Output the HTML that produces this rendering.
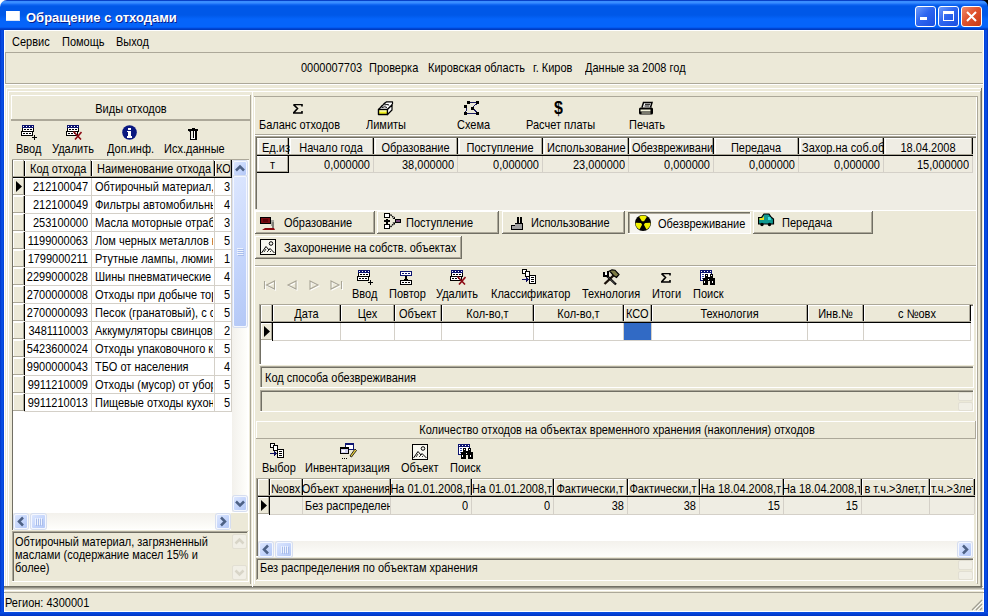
<!DOCTYPE html>
<html><head><meta charset="utf-8"><style>
html,body{margin:0;padding:0;width:988px;height:616px;overflow:hidden;background:#ECE9D8;}
.c1{left:0;top:0;width:8px;height:8px;background:#fff}.c2{left:980px;top:0;width:8px;height:8px;background:#000}
body{position:relative;font-family:"Liberation Sans",sans-serif;font-size:11px;color:#000;}
div,span,svg{position:absolute;}
.t{white-space:nowrap;line-height:13px;overflow:hidden;transform:scaleY(1.12);transform-origin:0 10px;}
.ct span{display:inline-block;transform:scaleY(1.12);transform-origin:0 10px;}
</style></head><body>
<div class="c1"></div><div class="c2"></div>
<div style="left:0;top:0;width:988px;height:30px;border-radius:7px 7px 0 0;background:linear-gradient(#0841C8 0px,#0841C8 1px,#3A8EFF 1px,#3A8EFF 3px,#1A70F8 4px,#0058E8 6px,#0058E8 15px,#0564FA 19px,#0564FA 27px,#0050E8 28px,#003CC0 29px,#003CC0 30px)"></div>
<div style="left:0px;top:30px;width:4px;height:586px;background:linear-gradient(90deg,#0034C8,#0A52E8 50%,#003DD6)"></div>
<div style="left:984px;top:30px;width:4px;height:586px;background:linear-gradient(90deg,#003DD6,#0A52E8 50%,#0030C0)"></div>
<div style="left:0px;top:612px;width:988px;height:4px;background:linear-gradient(#0A4FE4,#0034C4)"></div>
<div style="left:6px;top:11px;width:14px;height:10px;background:#FFFFFF;box-shadow:inset -1px -1px 0 #D8E4F8"></div>
<span class="t" style="left:26px;top:10px;font-weight:bold;font-size:13px;line-height:16px;color:#fff;transform:none;text-shadow:1px 1px 0 #0A1E8A">Обращение с отходами</span>
<div style="left:915px;top:6px;width:21px;height:21px;box-sizing:border-box;border:1px solid #fff;border-radius:3px;background:linear-gradient(135deg,#6E9BFA 0%,#2E66F0 45%,#1B4FE0 100%)"></div>
<div style="left:938px;top:6px;width:21px;height:21px;box-sizing:border-box;border:1px solid #fff;border-radius:3px;background:linear-gradient(135deg,#6E9BFA 0%,#2E66F0 45%,#1B4FE0 100%)"></div>
<div style="left:961px;top:6px;width:21px;height:21px;box-sizing:border-box;border:1px solid #fff;border-radius:3px;background:linear-gradient(135deg,#F08A6A 0%,#E0532E 45%,#C83A14 100%)"></div>
<div style="left:920px;top:17px;width:7px;height:3px;background:#fff"></div>
<div style="left:943px;top:11px;width:11px;height:10px;box-sizing:border-box;border:1px solid #fff;border-top:3px solid #fff"></div>
<svg style="position:absolute;left:961px;top:6px" width="21" height="21"><path d="M6 6L15 15M15 6L6 15" stroke="#fff" stroke-width="2" /></svg>
<div style="left:4px;top:30px;width:980px;height:1px;background:#FFFFFF"></div>
<span class="t" style="left:12px;top:36px;overflow:visible;">Сервис</span>
<span class="t" style="left:62px;top:36px;overflow:visible;">Помощь</span>
<span class="t" style="left:116px;top:36px;overflow:visible;">Выход</span>
<div style="left:5px;top:52px;width:977px;height:1px;background:#ACA899"></div>
<div style="left:5px;top:52px;width:1px;height:31px;background:#ACA899"></div>
<div style="left:4px;top:83px;width:980px;height:1px;background:#ACA899"></div>
<div style="left:4px;top:84px;width:980px;height:1px;background:#FFFFFF"></div>
<span class="t" style="left:301px;top:62px;overflow:visible;">0000007703</span>
<span class="t" style="left:369px;top:62px;overflow:visible;">Проверка</span>
<span class="t" style="left:428px;top:62px;overflow:visible;">Кировская область</span>
<span class="t" style="left:533px;top:62px;overflow:visible;">г. Киров</span>
<span class="t" style="left:585px;top:62px;overflow:visible;">Данные за 2008 год</span>
<div style="left:4px;top:586px;width:980px;height:1px;background:#ACA899"></div>
<div style="left:4px;top:587px;width:980px;height:1px;background:#FFFFFF"></div>
<span class="t" style="left:5px;top:597px;overflow:visible;">Регион: 4300001</span>
<div style="left:11px;top:95px;width:240px;height:1px;background:#FFFFFF"></div>
<div style="left:11px;top:95px;width:1px;height:26px;background:#FFFFFF"></div>
<div style="left:11px;top:120px;width:240px;height:1px;background:#ACA899"></div>
<div style="left:250px;top:95px;width:1px;height:26px;background:#ACA899"></div>
<div style="left:11px;top:119px;width:239px;height:1px;background:#ACA899"></div>
<span class="t" style="left:11px;top:103px;width:240px;text-align:center;">Виды отходов</span>
<span class="t" style="left:16px;top:143px;overflow:visible;">Ввод</span>
<span class="t" style="left:52px;top:143px;overflow:visible;">Удалить</span>
<span class="t" style="left:107px;top:143px;overflow:visible;">Доп.инф.</span>
<span class="t" style="left:164px;top:143px;overflow:visible;">Исх.данные</span>
<div style="left:12px;top:159px;width:237px;height:371px;background:#fff"></div>
<div style="left:12px;top:159px;width:1px;height:371px;background:#716F64"></div>
<div style="left:12px;top:159px;width:237px;height:1px;background:#ACA899"></div>
<div style="left:13px;top:160px;width:218px;height:17px;background:#ECE9D8"></div>
<div style="left:13px;top:160px;width:11px;height:1px;background:#FFFFFF"></div>
<div style="left:13px;top:160px;width:1px;height:16px;background:#FFFFFF"></div>
<div style="left:23px;top:160px;width:1px;height:17px;background:#ACA899"></div>
<div style="left:24px;top:160px;width:1px;height:18px;background:#000"></div>
<div style="left:24px;top:160px;width:67px;height:1px;background:#FFFFFF"></div>
<div style="left:25px;top:160px;width:1px;height:16px;background:#FFFFFF"></div>
<div style="left:90px;top:160px;width:1px;height:17px;background:#ACA899"></div>
<div style="left:91px;top:160px;width:1px;height:18px;background:#000"></div>
<span class="t" style="left:30px;top:163px;width:64px;">Код отхода</span>
<div style="left:91px;top:160px;width:123px;height:1px;background:#FFFFFF"></div>
<div style="left:92px;top:160px;width:1px;height:16px;background:#FFFFFF"></div>
<div style="left:213px;top:160px;width:1px;height:17px;background:#ACA899"></div>
<div style="left:214px;top:160px;width:1px;height:18px;background:#000"></div>
<span class="t" style="left:97px;top:163px;width:120px;">Наименование отхода</span>
<div style="left:214px;top:160px;width:17px;height:1px;background:#FFFFFF"></div>
<div style="left:215px;top:160px;width:1px;height:16px;background:#FFFFFF"></div>
<div style="left:230px;top:160px;width:1px;height:17px;background:#ACA899"></div>
<div style="left:231px;top:160px;width:1px;height:18px;background:#000"></div>
<span class="t" style="left:216px;top:163px;width:14px;">КО</span>
<div style="left:13px;top:176px;width:218px;height:1px;background:#ACA899"></div>
<div style="left:13px;top:177px;width:218px;height:1px;background:#000"></div>
<div style="left:13px;top:178px;width:11px;height:17px;background:#ECE9D8"></div>
<div style="left:13px;top:178px;width:11px;height:1px;background:#FFFFFF"></div>
<div style="left:13px;top:178px;width:1px;height:17px;background:#FFFFFF"></div>
<div style="left:23px;top:178px;width:1px;height:17px;background:#ACA899"></div>
<div style="left:13px;top:194px;width:11px;height:1px;background:#ACA899"></div>
<div style="left:24px;top:178px;width:1px;height:18px;background:#000"></div>
<div style="left:24px;top:195px;width:207px;height:1px;background:#D4D0C8"></div>
<div style="left:91px;top:178px;width:1px;height:18px;background:#D4D0C8"></div>
<div style="left:214px;top:178px;width:1px;height:18px;background:#D4D0C8"></div>
<div style="left:231px;top:178px;width:1px;height:18px;background:#D4D0C8"></div>
<span class="t" style="left:18px;top:181px;width:70px;text-align:right;">212100047</span>
<span class="t" style="left:95px;top:181px;width:118px;">Обтирочный материал, загрязненный</span>
<span class="t" style="left:218px;top:181px;width:12px;text-align:right;">3</span>
<div style="left:13px;top:196px;width:11px;height:17px;background:#ECE9D8"></div>
<div style="left:13px;top:196px;width:11px;height:1px;background:#FFFFFF"></div>
<div style="left:13px;top:196px;width:1px;height:17px;background:#FFFFFF"></div>
<div style="left:23px;top:196px;width:1px;height:17px;background:#ACA899"></div>
<div style="left:13px;top:212px;width:11px;height:1px;background:#ACA899"></div>
<div style="left:24px;top:196px;width:1px;height:18px;background:#000"></div>
<div style="left:24px;top:213px;width:207px;height:1px;background:#D4D0C8"></div>
<div style="left:91px;top:196px;width:1px;height:18px;background:#D4D0C8"></div>
<div style="left:214px;top:196px;width:1px;height:18px;background:#D4D0C8"></div>
<div style="left:231px;top:196px;width:1px;height:18px;background:#D4D0C8"></div>
<span class="t" style="left:18px;top:199px;width:70px;text-align:right;">212100049</span>
<span class="t" style="left:95px;top:199px;width:118px;">Фильтры автомобильные</span>
<span class="t" style="left:218px;top:199px;width:12px;text-align:right;">4</span>
<div style="left:13px;top:214px;width:11px;height:17px;background:#ECE9D8"></div>
<div style="left:13px;top:214px;width:11px;height:1px;background:#FFFFFF"></div>
<div style="left:13px;top:214px;width:1px;height:17px;background:#FFFFFF"></div>
<div style="left:23px;top:214px;width:1px;height:17px;background:#ACA899"></div>
<div style="left:13px;top:230px;width:11px;height:1px;background:#ACA899"></div>
<div style="left:24px;top:214px;width:1px;height:18px;background:#000"></div>
<div style="left:24px;top:231px;width:207px;height:1px;background:#D4D0C8"></div>
<div style="left:91px;top:214px;width:1px;height:18px;background:#D4D0C8"></div>
<div style="left:214px;top:214px;width:1px;height:18px;background:#D4D0C8"></div>
<div style="left:231px;top:214px;width:1px;height:18px;background:#D4D0C8"></div>
<span class="t" style="left:18px;top:217px;width:70px;text-align:right;">253100000</span>
<span class="t" style="left:95px;top:217px;width:118px;">Масла моторные отработанные</span>
<span class="t" style="left:218px;top:217px;width:12px;text-align:right;">3</span>
<div style="left:13px;top:232px;width:11px;height:17px;background:#ECE9D8"></div>
<div style="left:13px;top:232px;width:11px;height:1px;background:#FFFFFF"></div>
<div style="left:13px;top:232px;width:1px;height:17px;background:#FFFFFF"></div>
<div style="left:23px;top:232px;width:1px;height:17px;background:#ACA899"></div>
<div style="left:13px;top:248px;width:11px;height:1px;background:#ACA899"></div>
<div style="left:24px;top:232px;width:1px;height:18px;background:#000"></div>
<div style="left:24px;top:249px;width:207px;height:1px;background:#D4D0C8"></div>
<div style="left:91px;top:232px;width:1px;height:18px;background:#D4D0C8"></div>
<div style="left:214px;top:232px;width:1px;height:18px;background:#D4D0C8"></div>
<div style="left:231px;top:232px;width:1px;height:18px;background:#D4D0C8"></div>
<span class="t" style="left:18px;top:235px;width:70px;text-align:right;">1199000063</span>
<span class="t" style="left:95px;top:235px;width:118px;">Лом черных металлов несортированный</span>
<span class="t" style="left:218px;top:235px;width:12px;text-align:right;">5</span>
<div style="left:13px;top:250px;width:11px;height:17px;background:#ECE9D8"></div>
<div style="left:13px;top:250px;width:11px;height:1px;background:#FFFFFF"></div>
<div style="left:13px;top:250px;width:1px;height:17px;background:#FFFFFF"></div>
<div style="left:23px;top:250px;width:1px;height:17px;background:#ACA899"></div>
<div style="left:13px;top:266px;width:11px;height:1px;background:#ACA899"></div>
<div style="left:24px;top:250px;width:1px;height:18px;background:#000"></div>
<div style="left:24px;top:267px;width:207px;height:1px;background:#D4D0C8"></div>
<div style="left:91px;top:250px;width:1px;height:18px;background:#D4D0C8"></div>
<div style="left:214px;top:250px;width:1px;height:18px;background:#D4D0C8"></div>
<div style="left:231px;top:250px;width:1px;height:18px;background:#D4D0C8"></div>
<span class="t" style="left:18px;top:253px;width:70px;text-align:right;">1799000211</span>
<span class="t" style="left:95px;top:253px;width:118px;">Ртутные лампы, люминесцентные</span>
<span class="t" style="left:218px;top:253px;width:12px;text-align:right;">1</span>
<div style="left:13px;top:268px;width:11px;height:17px;background:#ECE9D8"></div>
<div style="left:13px;top:268px;width:11px;height:1px;background:#FFFFFF"></div>
<div style="left:13px;top:268px;width:1px;height:17px;background:#FFFFFF"></div>
<div style="left:23px;top:268px;width:1px;height:17px;background:#ACA899"></div>
<div style="left:13px;top:284px;width:11px;height:1px;background:#ACA899"></div>
<div style="left:24px;top:268px;width:1px;height:18px;background:#000"></div>
<div style="left:24px;top:285px;width:207px;height:1px;background:#D4D0C8"></div>
<div style="left:91px;top:268px;width:1px;height:18px;background:#D4D0C8"></div>
<div style="left:214px;top:268px;width:1px;height:18px;background:#D4D0C8"></div>
<div style="left:231px;top:268px;width:1px;height:18px;background:#D4D0C8"></div>
<span class="t" style="left:18px;top:271px;width:70px;text-align:right;">2299000028</span>
<span class="t" style="left:95px;top:271px;width:118px;">Шины пневматические</span>
<span class="t" style="left:218px;top:271px;width:12px;text-align:right;">4</span>
<div style="left:13px;top:286px;width:11px;height:17px;background:#ECE9D8"></div>
<div style="left:13px;top:286px;width:11px;height:1px;background:#FFFFFF"></div>
<div style="left:13px;top:286px;width:1px;height:17px;background:#FFFFFF"></div>
<div style="left:23px;top:286px;width:1px;height:17px;background:#ACA899"></div>
<div style="left:13px;top:302px;width:11px;height:1px;background:#ACA899"></div>
<div style="left:24px;top:286px;width:1px;height:18px;background:#000"></div>
<div style="left:24px;top:303px;width:207px;height:1px;background:#D4D0C8"></div>
<div style="left:91px;top:286px;width:1px;height:18px;background:#D4D0C8"></div>
<div style="left:214px;top:286px;width:1px;height:18px;background:#D4D0C8"></div>
<div style="left:231px;top:286px;width:1px;height:18px;background:#D4D0C8"></div>
<span class="t" style="left:18px;top:289px;width:70px;text-align:right;">2700000008</span>
<span class="t" style="left:95px;top:289px;width:118px;">Отходы при добыче торфа</span>
<span class="t" style="left:218px;top:289px;width:12px;text-align:right;">5</span>
<div style="left:13px;top:304px;width:11px;height:17px;background:#ECE9D8"></div>
<div style="left:13px;top:304px;width:11px;height:1px;background:#FFFFFF"></div>
<div style="left:13px;top:304px;width:1px;height:17px;background:#FFFFFF"></div>
<div style="left:23px;top:304px;width:1px;height:17px;background:#ACA899"></div>
<div style="left:13px;top:320px;width:11px;height:1px;background:#ACA899"></div>
<div style="left:24px;top:304px;width:1px;height:18px;background:#000"></div>
<div style="left:24px;top:321px;width:207px;height:1px;background:#D4D0C8"></div>
<div style="left:91px;top:304px;width:1px;height:18px;background:#D4D0C8"></div>
<div style="left:214px;top:304px;width:1px;height:18px;background:#D4D0C8"></div>
<div style="left:231px;top:304px;width:1px;height:18px;background:#D4D0C8"></div>
<span class="t" style="left:18px;top:307px;width:70px;text-align:right;">2700000093</span>
<span class="t" style="left:95px;top:307px;width:118px;">Песок (гранатовый), с содержанием</span>
<span class="t" style="left:218px;top:307px;width:12px;text-align:right;">5</span>
<div style="left:13px;top:322px;width:11px;height:17px;background:#ECE9D8"></div>
<div style="left:13px;top:322px;width:11px;height:1px;background:#FFFFFF"></div>
<div style="left:13px;top:322px;width:1px;height:17px;background:#FFFFFF"></div>
<div style="left:23px;top:322px;width:1px;height:17px;background:#ACA899"></div>
<div style="left:13px;top:338px;width:11px;height:1px;background:#ACA899"></div>
<div style="left:24px;top:322px;width:1px;height:18px;background:#000"></div>
<div style="left:24px;top:339px;width:207px;height:1px;background:#D4D0C8"></div>
<div style="left:91px;top:322px;width:1px;height:18px;background:#D4D0C8"></div>
<div style="left:214px;top:322px;width:1px;height:18px;background:#D4D0C8"></div>
<div style="left:231px;top:322px;width:1px;height:18px;background:#D4D0C8"></div>
<span class="t" style="left:18px;top:325px;width:70px;text-align:right;">3481110003</span>
<span class="t" style="left:95px;top:325px;width:118px;">Аккумуляторы свинцовые</span>
<span class="t" style="left:218px;top:325px;width:12px;text-align:right;">2</span>
<div style="left:13px;top:340px;width:11px;height:17px;background:#ECE9D8"></div>
<div style="left:13px;top:340px;width:11px;height:1px;background:#FFFFFF"></div>
<div style="left:13px;top:340px;width:1px;height:17px;background:#FFFFFF"></div>
<div style="left:23px;top:340px;width:1px;height:17px;background:#ACA899"></div>
<div style="left:13px;top:356px;width:11px;height:1px;background:#ACA899"></div>
<div style="left:24px;top:340px;width:1px;height:18px;background:#000"></div>
<div style="left:24px;top:357px;width:207px;height:1px;background:#D4D0C8"></div>
<div style="left:91px;top:340px;width:1px;height:18px;background:#D4D0C8"></div>
<div style="left:214px;top:340px;width:1px;height:18px;background:#D4D0C8"></div>
<div style="left:231px;top:340px;width:1px;height:18px;background:#D4D0C8"></div>
<span class="t" style="left:18px;top:343px;width:70px;text-align:right;">5423600024</span>
<span class="t" style="left:95px;top:343px;width:118px;">Отходы упаковочного картона</span>
<span class="t" style="left:218px;top:343px;width:12px;text-align:right;">5</span>
<div style="left:13px;top:358px;width:11px;height:17px;background:#ECE9D8"></div>
<div style="left:13px;top:358px;width:11px;height:1px;background:#FFFFFF"></div>
<div style="left:13px;top:358px;width:1px;height:17px;background:#FFFFFF"></div>
<div style="left:23px;top:358px;width:1px;height:17px;background:#ACA899"></div>
<div style="left:13px;top:374px;width:11px;height:1px;background:#ACA899"></div>
<div style="left:24px;top:358px;width:1px;height:18px;background:#000"></div>
<div style="left:24px;top:375px;width:207px;height:1px;background:#D4D0C8"></div>
<div style="left:91px;top:358px;width:1px;height:18px;background:#D4D0C8"></div>
<div style="left:214px;top:358px;width:1px;height:18px;background:#D4D0C8"></div>
<div style="left:231px;top:358px;width:1px;height:18px;background:#D4D0C8"></div>
<span class="t" style="left:18px;top:361px;width:70px;text-align:right;">9900000043</span>
<span class="t" style="left:95px;top:361px;width:118px;">ТБО от населения</span>
<span class="t" style="left:218px;top:361px;width:12px;text-align:right;">4</span>
<div style="left:13px;top:376px;width:11px;height:17px;background:#ECE9D8"></div>
<div style="left:13px;top:376px;width:11px;height:1px;background:#FFFFFF"></div>
<div style="left:13px;top:376px;width:1px;height:17px;background:#FFFFFF"></div>
<div style="left:23px;top:376px;width:1px;height:17px;background:#ACA899"></div>
<div style="left:13px;top:392px;width:11px;height:1px;background:#ACA899"></div>
<div style="left:24px;top:376px;width:1px;height:18px;background:#000"></div>
<div style="left:24px;top:393px;width:207px;height:1px;background:#D4D0C8"></div>
<div style="left:91px;top:376px;width:1px;height:18px;background:#D4D0C8"></div>
<div style="left:214px;top:376px;width:1px;height:18px;background:#D4D0C8"></div>
<div style="left:231px;top:376px;width:1px;height:18px;background:#D4D0C8"></div>
<span class="t" style="left:18px;top:379px;width:70px;text-align:right;">9911210009</span>
<span class="t" style="left:95px;top:379px;width:118px;">Отходы (мусор) от уборки</span>
<span class="t" style="left:218px;top:379px;width:12px;text-align:right;">5</span>
<div style="left:13px;top:394px;width:11px;height:17px;background:#ECE9D8"></div>
<div style="left:13px;top:394px;width:11px;height:1px;background:#FFFFFF"></div>
<div style="left:13px;top:394px;width:1px;height:17px;background:#FFFFFF"></div>
<div style="left:23px;top:394px;width:1px;height:17px;background:#ACA899"></div>
<div style="left:13px;top:410px;width:11px;height:1px;background:#ACA899"></div>
<div style="left:24px;top:394px;width:1px;height:18px;background:#000"></div>
<div style="left:24px;top:411px;width:207px;height:1px;background:#D4D0C8"></div>
<div style="left:91px;top:394px;width:1px;height:18px;background:#D4D0C8"></div>
<div style="left:214px;top:394px;width:1px;height:18px;background:#D4D0C8"></div>
<div style="left:231px;top:394px;width:1px;height:18px;background:#D4D0C8"></div>
<span class="t" style="left:18px;top:397px;width:70px;text-align:right;">9911210013</span>
<span class="t" style="left:95px;top:397px;width:118px;">Пищевые отходы кухонь</span>
<span class="t" style="left:218px;top:397px;width:12px;text-align:right;">5</span>
<svg style="left:0;top:0" width="988" height="616"><path d="M16 181L22 186.5L16 192Z" fill="#000"/></svg>
<div style="left:232px;top:160px;width:15px;height:352px;background:linear-gradient(90deg,#F3F1EC,#FEFEFB)"></div>
<div style="left:233px;top:161px;width:14px;height:15px;box-sizing:border-box;border:1px solid #F4F7FE;border-radius:2px;background:linear-gradient(135deg,#DCE6FE 0%,#C3D4FB 60%,#B4C8F6 100%);box-shadow:0 0 0 1px #D6DEF0"></div>
<svg style="left:0;top:0" width="988" height="616"><path d="M236.0 170.5L240.0 166.5L244.0 170.5" stroke="#4D6185" stroke-width="2.5" fill="none"/></svg>
<div style="left:233px;top:496px;width:14px;height:15px;box-sizing:border-box;border:1px solid #F4F7FE;border-radius:2px;background:linear-gradient(135deg,#DCE6FE 0%,#C3D4FB 60%,#B4C8F6 100%);box-shadow:0 0 0 1px #D6DEF0"></div>
<svg style="left:0;top:0" width="988" height="616"><path d="M236.0 501.5L240.0 505.5L244.0 501.5" stroke="#4D6185" stroke-width="2.5" fill="none"/></svg>
<div style="left:233px;top:176px;width:14px;height:151px;box-sizing:border-box;border:1px solid #F4F7FE;border-radius:2px;background:linear-gradient(135deg,#DCE6FE 0%,#C3D4FB 60%,#B4C8F6 100%);box-shadow:0 0 0 1px #D6DEF0"></div>
<div style="left:237px;top:248px;width:6px;height:1px;background:#EEF3FE"></div>
<div style="left:238px;top:249px;width:6px;height:1px;background:#A9BDEB"></div>
<div style="left:237px;top:250px;width:6px;height:1px;background:#EEF3FE"></div>
<div style="left:238px;top:251px;width:6px;height:1px;background:#A9BDEB"></div>
<div style="left:237px;top:252px;width:6px;height:1px;background:#EEF3FE"></div>
<div style="left:238px;top:253px;width:6px;height:1px;background:#A9BDEB"></div>
<div style="left:237px;top:254px;width:6px;height:1px;background:#EEF3FE"></div>
<div style="left:238px;top:255px;width:6px;height:1px;background:#A9BDEB"></div>
<div style="left:13px;top:513px;width:218px;height:16px;background:linear-gradient(#F3F1EC,#FEFEFB)"></div>
<div style="left:14px;top:514px;width:14px;height:15px;box-sizing:border-box;border:1px solid #F4F7FE;border-radius:2px;background:linear-gradient(135deg,#DCE6FE 0%,#C3D4FB 60%,#B4C8F6 100%);box-shadow:0 0 0 1px #D6DEF0"></div>
<svg style="left:0;top:0" width="988" height="616"><path d="M23.0 517.5L19.0 521.5L23.0 525.5" stroke="#4D6185" stroke-width="2.5" fill="none"/></svg>
<div style="left:216px;top:514px;width:14px;height:15px;box-sizing:border-box;border:1px solid #F4F7FE;border-radius:2px;background:linear-gradient(135deg,#DCE6FE 0%,#C3D4FB 60%,#B4C8F6 100%);box-shadow:0 0 0 1px #D6DEF0"></div>
<svg style="left:0;top:0" width="988" height="616"><path d="M221.0 517.5L225.0 521.5L221.0 525.5" stroke="#4D6185" stroke-width="2.5" fill="none"/></svg>
<div style="left:31px;top:514px;width:15px;height:15px;box-sizing:border-box;border:1px solid #F4F7FE;border-radius:2px;background:linear-gradient(135deg,#DCE6FE 0%,#C3D4FB 60%,#B4C8F6 100%);box-shadow:0 0 0 1px #D6DEF0"></div>
<div style="left:35px;top:518px;width:1px;height:7px;background:#EEF3FE"></div>
<div style="left:36px;top:519px;width:1px;height:7px;background:#A9BDEB"></div>
<div style="left:37px;top:518px;width:1px;height:7px;background:#EEF3FE"></div>
<div style="left:38px;top:519px;width:1px;height:7px;background:#A9BDEB"></div>
<div style="left:39px;top:518px;width:1px;height:7px;background:#EEF3FE"></div>
<div style="left:40px;top:519px;width:1px;height:7px;background:#A9BDEB"></div>
<div style="left:41px;top:518px;width:1px;height:7px;background:#EEF3FE"></div>
<div style="left:42px;top:519px;width:1px;height:7px;background:#A9BDEB"></div>
<div style="left:231px;top:513px;width:17px;height:17px;background:#ECE9D8"></div>
<div style="left:12px;top:531px;width:236px;height:51px;background:#ECE9D8"></div>
<div style="left:12px;top:531px;width:1px;height:51px;background:#ACA899"></div>
<div style="left:13px;top:532px;width:1px;height:49px;background:#716F64"></div>
<div style="left:12px;top:531px;width:236px;height:1px;background:#ACA899"></div>
<div style="left:13px;top:532px;width:234px;height:1px;background:#716F64"></div>
<div style="left:12px;top:581px;width:237px;height:1px;background:#FFFFFF"></div>
<div style="left:248px;top:531px;width:1px;height:51px;background:#FFFFFF"></div>
<span class="t" style="left:15px;top:536px;overflow:visible;">Обтирочный материал, загрязненный</span>
<span class="t" style="left:15px;top:549px;overflow:visible;">маслами (содержание масел 15% и</span>
<span class="t" style="left:15px;top:562px;overflow:visible;">более)</span>
<div style="left:232px;top:534px;width:15px;height:15px;box-sizing:border-box;border:1px solid #E2DFD3;border-radius:2px;background:#F1EFE6"></div>
<div style="left:232px;top:565px;width:15px;height:15px;box-sizing:border-box;border:1px solid #E2DFD3;border-radius:2px;background:#F1EFE6"></div>
<svg style="left:0;top:0" width="988" height="616"><path d="M235.5 543.5L239.5 539.5L243.5 543.5" stroke="#D8D5C8" stroke-width="2.5" fill="none"/></svg>
<svg style="left:0;top:0" width="988" height="616"><path d="M235.5 570.5L239.5 574.5L243.5 570.5" stroke="#D8D5C8" stroke-width="2.5" fill="none"/></svg>
<div style="left:250px;top:96px;width:1px;height:488px;background:#ACA899"></div>
<div style="left:254px;top:96px;width:1px;height:488px;background:#FFFFFF"></div>
<div style="left:254px;top:96px;width:723px;height:1px;background:#ACA899"></div>
<div style="left:977px;top:96px;width:1px;height:488px;background:#ACA899"></div>
<div style="left:976px;top:97px;width:1px;height:486px;background:#FFFFFF"></div>
<span class="t" style="left:259px;top:119px;overflow:visible;">Баланс отходов</span>
<span class="t" style="left:366px;top:119px;overflow:visible;">Лимиты</span>
<span class="t" style="left:457px;top:119px;overflow:visible;">Схема</span>
<span class="t" style="left:526px;top:119px;overflow:visible;">Расчет платы</span>
<span class="t" style="left:629px;top:119px;overflow:visible;">Печать</span>
<div style="left:255px;top:134px;width:721px;height:1px;background:#ACA899"></div>
<div style="left:255px;top:135px;width:721px;height:1px;background:#FFFFFF"></div>
<div style="left:255px;top:136px;width:721px;height:74px;background:#EFEDE4"></div>
<div style="left:255px;top:136px;width:721px;height:1px;background:#ACA899"></div>
<div style="left:255px;top:136px;width:1px;height:73px;background:#ACA899"></div>
<div style="left:256px;top:137px;width:720px;height:1px;background:#716F64"></div>
<div style="left:256px;top:137px;width:1px;height:72px;background:#716F64"></div>
<div style="left:257px;top:138px;width:32px;height:1px;background:#FFFFFF"></div>
<div style="left:258px;top:138px;width:1px;height:17px;background:#FFFFFF"></div>
<div style="left:287px;top:138px;width:1px;height:17px;background:#ACA899"></div>
<div style="left:288px;top:138px;width:1px;height:18px;background:#000"></div>
<span class="t" style="left:262px;top:142px;width:28px;">Ед.из</span>
<div style="left:257px;top:156px;width:32px;height:1px;background:#FFFFFF"></div>
<div style="left:258px;top:156px;width:1px;height:16px;background:#FFFFFF"></div>
<div style="left:287px;top:156px;width:1px;height:16px;background:#ACA899"></div>
<div style="left:288px;top:156px;width:1px;height:17px;background:#000"></div>
<div style="left:257px;top:171px;width:31px;height:1px;background:#ACA899"></div>
<div style="left:257px;top:172px;width:32px;height:1px;background:#000"></div>
<span class="t" style="left:257px;top:159px;width:31px;text-align:center;">т</span>
<div style="left:289px;top:138px;width:85px;height:1px;background:#FFFFFF"></div>
<div style="left:290px;top:138px;width:1px;height:17px;background:#FFFFFF"></div>
<div style="left:372px;top:138px;width:1px;height:17px;background:#ACA899"></div>
<div style="left:373px;top:138px;width:1px;height:18px;background:#000"></div>
<span class="t" style="left:289px;top:142px;width:84px;text-align:center;">Начало года</span>
<div style="left:289px;top:156px;width:85px;height:16px;background:#EEEBDF"></div>
<div style="left:373px;top:156px;width:1px;height:17px;background:#D4D0C8"></div>
<div style="left:289px;top:172px;width:85px;height:1px;background:#D4D0C8"></div>
<span class="t" style="left:291px;top:159px;width:79px;text-align:right;">0,000000</span>
<div style="left:374px;top:138px;width:84px;height:1px;background:#FFFFFF"></div>
<div style="left:375px;top:138px;width:1px;height:17px;background:#FFFFFF"></div>
<div style="left:456px;top:138px;width:1px;height:17px;background:#ACA899"></div>
<div style="left:457px;top:138px;width:1px;height:18px;background:#000"></div>
<span class="t" style="left:374px;top:142px;width:83px;text-align:center;">Образование</span>
<div style="left:374px;top:156px;width:84px;height:16px;background:#EEEBDF"></div>
<div style="left:457px;top:156px;width:1px;height:17px;background:#D4D0C8"></div>
<div style="left:374px;top:172px;width:84px;height:1px;background:#D4D0C8"></div>
<span class="t" style="left:376px;top:159px;width:78px;text-align:right;">38,000000</span>
<div style="left:458px;top:138px;width:85px;height:1px;background:#FFFFFF"></div>
<div style="left:459px;top:138px;width:1px;height:17px;background:#FFFFFF"></div>
<div style="left:541px;top:138px;width:1px;height:17px;background:#ACA899"></div>
<div style="left:542px;top:138px;width:1px;height:18px;background:#000"></div>
<span class="t" style="left:458px;top:142px;width:84px;text-align:center;">Поступление</span>
<div style="left:458px;top:156px;width:85px;height:16px;background:#EEEBDF"></div>
<div style="left:542px;top:156px;width:1px;height:17px;background:#D4D0C8"></div>
<div style="left:458px;top:172px;width:85px;height:1px;background:#D4D0C8"></div>
<span class="t" style="left:460px;top:159px;width:79px;text-align:right;">0,000000</span>
<div style="left:543px;top:138px;width:86px;height:1px;background:#FFFFFF"></div>
<div style="left:544px;top:138px;width:1px;height:17px;background:#FFFFFF"></div>
<div style="left:627px;top:138px;width:1px;height:17px;background:#ACA899"></div>
<div style="left:628px;top:138px;width:1px;height:18px;background:#000"></div>
<span class="t" style="left:547px;top:142px;width:83px;">Использование</span>
<div style="left:543px;top:156px;width:86px;height:16px;background:#EEEBDF"></div>
<div style="left:628px;top:156px;width:1px;height:17px;background:#D4D0C8"></div>
<div style="left:543px;top:172px;width:86px;height:1px;background:#D4D0C8"></div>
<span class="t" style="left:545px;top:159px;width:80px;text-align:right;">23,000000</span>
<div style="left:629px;top:138px;width:85px;height:1px;background:#FFFFFF"></div>
<div style="left:630px;top:138px;width:1px;height:17px;background:#FFFFFF"></div>
<div style="left:712px;top:138px;width:1px;height:17px;background:#ACA899"></div>
<div style="left:713px;top:138px;width:1px;height:18px;background:#000"></div>
<span class="t" style="left:632px;top:142px;width:82px;">Обезвреживание</span>
<div style="left:629px;top:156px;width:85px;height:16px;background:#EEEBDF"></div>
<div style="left:713px;top:156px;width:1px;height:17px;background:#D4D0C8"></div>
<div style="left:629px;top:172px;width:85px;height:1px;background:#D4D0C8"></div>
<span class="t" style="left:631px;top:159px;width:79px;text-align:right;">0,000000</span>
<div style="left:714px;top:138px;width:85px;height:1px;background:#FFFFFF"></div>
<div style="left:715px;top:138px;width:1px;height:17px;background:#FFFFFF"></div>
<div style="left:797px;top:138px;width:1px;height:17px;background:#ACA899"></div>
<div style="left:798px;top:138px;width:1px;height:18px;background:#000"></div>
<span class="t" style="left:714px;top:142px;width:84px;text-align:center;">Передача</span>
<div style="left:714px;top:156px;width:85px;height:16px;background:#EEEBDF"></div>
<div style="left:798px;top:156px;width:1px;height:17px;background:#D4D0C8"></div>
<div style="left:714px;top:172px;width:85px;height:1px;background:#D4D0C8"></div>
<span class="t" style="left:716px;top:159px;width:79px;text-align:right;">0,000000</span>
<div style="left:799px;top:138px;width:85px;height:1px;background:#FFFFFF"></div>
<div style="left:800px;top:138px;width:1px;height:17px;background:#FFFFFF"></div>
<div style="left:882px;top:138px;width:1px;height:17px;background:#ACA899"></div>
<div style="left:883px;top:138px;width:1px;height:18px;background:#000"></div>
<span class="t" style="left:802px;top:142px;width:82px;">Захор.на соб.об</span>
<div style="left:799px;top:156px;width:85px;height:16px;background:#EEEBDF"></div>
<div style="left:883px;top:156px;width:1px;height:17px;background:#D4D0C8"></div>
<div style="left:799px;top:172px;width:85px;height:1px;background:#D4D0C8"></div>
<span class="t" style="left:801px;top:159px;width:79px;text-align:right;">0,000000</span>
<div style="left:884px;top:138px;width:89px;height:1px;background:#FFFFFF"></div>
<div style="left:885px;top:138px;width:1px;height:17px;background:#FFFFFF"></div>
<div style="left:971px;top:138px;width:1px;height:17px;background:#ACA899"></div>
<div style="left:972px;top:138px;width:1px;height:18px;background:#000"></div>
<span class="t" style="left:884px;top:142px;width:88px;text-align:center;">18.04.2008</span>
<div style="left:884px;top:156px;width:89px;height:16px;background:#EEEBDF"></div>
<div style="left:972px;top:156px;width:1px;height:17px;background:#D4D0C8"></div>
<div style="left:884px;top:172px;width:89px;height:1px;background:#D4D0C8"></div>
<span class="t" style="left:886px;top:159px;width:83px;text-align:right;">15,000000</span>
<div style="left:257px;top:154px;width:716px;height:1px;background:#ACA899"></div>
<div style="left:257px;top:155px;width:716px;height:1px;background:#000"></div>
<div style="left:255px;top:210px;width:721px;height:1px;background:#FFFFFF"></div>
<div style="left:255px;top:211px;width:120px;height:23px;background:#ECE9D8"></div>
<div style="left:255px;top:211px;width:120px;height:1px;background:#FFFFFF"></div>
<div style="left:255px;top:211px;width:1px;height:23px;background:#FFFFFF"></div>
<div style="left:256px;top:232px;width:118px;height:1px;background:#ACA899"></div>
<div style="left:373px;top:212px;width:1px;height:21px;background:#ACA899"></div>
<div style="left:255px;top:233px;width:120px;height:1px;background:#716F64"></div>
<div style="left:374px;top:211px;width:1px;height:23px;background:#716F64"></div>
<span class="t" style="left:284px;top:217px;overflow:visible;">Образование</span>
<div style="left:377px;top:211px;width:122px;height:23px;background:#ECE9D8"></div>
<div style="left:377px;top:211px;width:122px;height:1px;background:#FFFFFF"></div>
<div style="left:377px;top:211px;width:1px;height:23px;background:#FFFFFF"></div>
<div style="left:378px;top:232px;width:120px;height:1px;background:#ACA899"></div>
<div style="left:497px;top:212px;width:1px;height:21px;background:#ACA899"></div>
<div style="left:377px;top:233px;width:122px;height:1px;background:#716F64"></div>
<div style="left:498px;top:211px;width:1px;height:23px;background:#716F64"></div>
<span class="t" style="left:406px;top:217px;overflow:visible;">Поступление</span>
<div style="left:502px;top:211px;width:123px;height:23px;background:#ECE9D8"></div>
<div style="left:502px;top:211px;width:123px;height:1px;background:#FFFFFF"></div>
<div style="left:502px;top:211px;width:1px;height:23px;background:#FFFFFF"></div>
<div style="left:503px;top:232px;width:121px;height:1px;background:#ACA899"></div>
<div style="left:623px;top:212px;width:1px;height:21px;background:#ACA899"></div>
<div style="left:502px;top:233px;width:123px;height:1px;background:#716F64"></div>
<div style="left:624px;top:211px;width:1px;height:23px;background:#716F64"></div>
<span class="t" style="left:531px;top:217px;overflow:visible;">Использование</span>
<div style="left:628px;top:212px;width:123px;height:22px;background:#F6F5EF"></div>
<div style="left:628px;top:212px;width:123px;height:1px;background:#716F64"></div>
<div style="left:628px;top:212px;width:1px;height:22px;background:#716F64"></div>
<div style="left:629px;top:213px;width:121px;height:1px;background:#ACA899"></div>
<div style="left:629px;top:213px;width:1px;height:20px;background:#ACA899"></div>
<div style="left:628px;top:233px;width:123px;height:1px;background:#FFFFFF"></div>
<div style="left:750px;top:212px;width:1px;height:22px;background:#FFFFFF"></div>
<span class="t" style="left:658px;top:218px;overflow:visible;">Обезвреживание</span>
<div style="left:753px;top:211px;width:120px;height:23px;background:#ECE9D8"></div>
<div style="left:753px;top:211px;width:120px;height:1px;background:#FFFFFF"></div>
<div style="left:753px;top:211px;width:1px;height:23px;background:#FFFFFF"></div>
<div style="left:754px;top:232px;width:118px;height:1px;background:#ACA899"></div>
<div style="left:871px;top:212px;width:1px;height:21px;background:#ACA899"></div>
<div style="left:753px;top:233px;width:120px;height:1px;background:#716F64"></div>
<div style="left:872px;top:211px;width:1px;height:23px;background:#716F64"></div>
<span class="t" style="left:782px;top:217px;overflow:visible;">Передача</span>
<div style="left:255px;top:236px;width:207px;height:23px;background:#ECE9D8"></div>
<div style="left:255px;top:236px;width:207px;height:1px;background:#FFFFFF"></div>
<div style="left:255px;top:236px;width:1px;height:23px;background:#FFFFFF"></div>
<div style="left:256px;top:257px;width:205px;height:1px;background:#ACA899"></div>
<div style="left:460px;top:237px;width:1px;height:21px;background:#ACA899"></div>
<div style="left:255px;top:258px;width:207px;height:1px;background:#716F64"></div>
<div style="left:461px;top:236px;width:1px;height:23px;background:#716F64"></div>
<span class="t" style="left:284px;top:242px;overflow:visible;">Захоронение на собств. объектах</span>
<div style="left:255px;top:265px;width:721px;height:1px;background:#ACA899"></div>
<div style="left:255px;top:266px;width:721px;height:1px;background:#FFFFFF"></div>
<span class="t" style="left:352px;top:288px;overflow:visible;">Ввод</span>
<span class="t" style="left:389px;top:288px;overflow:visible;">Повтор</span>
<span class="t" style="left:436px;top:288px;overflow:visible;">Удалить</span>
<span class="t" style="left:491px;top:288px;overflow:visible;">Классификатор</span>
<span class="t" style="left:582px;top:288px;overflow:visible;">Технология</span>
<span class="t" style="left:652px;top:288px;overflow:visible;">Итоги</span>
<span class="t" style="left:693px;top:288px;overflow:visible;">Поиск</span>
<svg style="left:1px;top:1px" width="988" height="616" fill="none" stroke="#FFFFFF" stroke-width="1.1">
<path d="M264.5 281V289M274.5 281L266.5 285L274.5 289Z"/>
<path d="M296 281L288 285L296 289Z"/>
<path d="M310 281L318 285L310 289Z"/>
<path d="M331 281L339 285L331 289ZM341.5 281V289"/>
</svg>
<svg style="left:0px;top:0px" width="988" height="616" fill="none" stroke="#A8A596" stroke-width="1.1">
<path d="M264.5 281V289M274.5 281L266.5 285L274.5 289Z"/>
<path d="M296 281L288 285L296 289Z"/>
<path d="M310 281L318 285L310 289Z"/>
<path d="M331 281L339 285L331 289ZM341.5 281V289"/>
</svg>
<div style="left:259px;top:304px;width:715px;height:61px;background:#fff"></div>
<div style="left:259px;top:304px;width:715px;height:1px;background:#ACA899"></div>
<div style="left:259px;top:304px;width:1px;height:61px;background:#ACA899"></div>
<div style="left:260px;top:305px;width:714px;height:1px;background:#716F64"></div>
<div style="left:260px;top:305px;width:1px;height:60px;background:#716F64"></div>
<div style="left:259px;top:364px;width:715px;height:1px;background:#FFFFFF"></div>
<div style="left:973px;top:304px;width:1px;height:61px;background:#FFFFFF"></div>
<div style="left:261px;top:305px;width:710px;height:17px;background:#ECE9D8"></div>
<div style="left:261px;top:305px;width:11px;height:1px;background:#FFFFFF"></div>
<div style="left:261px;top:305px;width:1px;height:17px;background:#FFFFFF"></div>
<div style="left:271px;top:305px;width:1px;height:17px;background:#ACA899"></div>
<div style="left:272px;top:305px;width:1px;height:18px;background:#000"></div>
<div style="left:273px;top:305px;width:67px;height:1px;background:#FFFFFF"></div>
<div style="left:273px;top:305px;width:1px;height:17px;background:#FFFFFF"></div>
<div style="left:339px;top:305px;width:1px;height:17px;background:#ACA899"></div>
<div style="left:340px;top:305px;width:1px;height:18px;background:#000"></div>
<div style="left:341px;top:305px;width:53px;height:1px;background:#FFFFFF"></div>
<div style="left:341px;top:305px;width:1px;height:17px;background:#FFFFFF"></div>
<div style="left:393px;top:305px;width:1px;height:17px;background:#ACA899"></div>
<div style="left:394px;top:305px;width:1px;height:18px;background:#000"></div>
<div style="left:395px;top:305px;width:46px;height:1px;background:#FFFFFF"></div>
<div style="left:395px;top:305px;width:1px;height:17px;background:#FFFFFF"></div>
<div style="left:440px;top:305px;width:1px;height:17px;background:#ACA899"></div>
<div style="left:441px;top:305px;width:1px;height:18px;background:#000"></div>
<div style="left:442px;top:305px;width:91px;height:1px;background:#FFFFFF"></div>
<div style="left:442px;top:305px;width:1px;height:17px;background:#FFFFFF"></div>
<div style="left:532px;top:305px;width:1px;height:17px;background:#ACA899"></div>
<div style="left:533px;top:305px;width:1px;height:18px;background:#000"></div>
<div style="left:534px;top:305px;width:89px;height:1px;background:#FFFFFF"></div>
<div style="left:534px;top:305px;width:1px;height:17px;background:#FFFFFF"></div>
<div style="left:622px;top:305px;width:1px;height:17px;background:#ACA899"></div>
<div style="left:623px;top:305px;width:1px;height:18px;background:#000"></div>
<div style="left:624px;top:305px;width:27px;height:1px;background:#FFFFFF"></div>
<div style="left:624px;top:305px;width:1px;height:17px;background:#FFFFFF"></div>
<div style="left:650px;top:305px;width:1px;height:17px;background:#ACA899"></div>
<div style="left:651px;top:305px;width:1px;height:18px;background:#000"></div>
<div style="left:652px;top:305px;width:155px;height:1px;background:#FFFFFF"></div>
<div style="left:652px;top:305px;width:1px;height:17px;background:#FFFFFF"></div>
<div style="left:806px;top:305px;width:1px;height:17px;background:#ACA899"></div>
<div style="left:807px;top:305px;width:1px;height:18px;background:#000"></div>
<div style="left:808px;top:305px;width:55px;height:1px;background:#FFFFFF"></div>
<div style="left:808px;top:305px;width:1px;height:17px;background:#FFFFFF"></div>
<div style="left:862px;top:305px;width:1px;height:17px;background:#ACA899"></div>
<div style="left:863px;top:305px;width:1px;height:18px;background:#000"></div>
<div style="left:864px;top:305px;width:106px;height:1px;background:#FFFFFF"></div>
<div style="left:864px;top:305px;width:1px;height:17px;background:#FFFFFF"></div>
<div style="left:969px;top:305px;width:1px;height:17px;background:#ACA899"></div>
<div style="left:970px;top:305px;width:1px;height:18px;background:#000"></div>
<div style="left:261px;top:321px;width:710px;height:1px;background:#ACA899"></div>
<div style="left:261px;top:322px;width:710px;height:1px;background:#000"></div>
<span class="t" style="left:273px;top:308px;width:67px;text-align:center;">Дата</span>
<span class="t" style="left:341px;top:308px;width:53px;text-align:center;">Цех</span>
<span class="t" style="left:399px;top:308px;width:42px;">Объект</span>
<span class="t" style="left:442px;top:308px;width:91px;text-align:center;">Кол-во,т</span>
<span class="t" style="left:534px;top:308px;width:89px;text-align:center;">Кол-во,т</span>
<span class="t" style="left:626px;top:308px;width:25px;">КСО</span>
<span class="t" style="left:652px;top:308px;width:155px;text-align:center;">Технология</span>
<span class="t" style="left:808px;top:308px;width:55px;text-align:center;">Инв.№</span>
<span class="t" style="left:864px;top:308px;width:106px;text-align:center;">с №овх</span>
<div style="left:261px;top:323px;width:11px;height:17px;background:#ECE9D8"></div>
<div style="left:261px;top:323px;width:11px;height:1px;background:#FFFFFF"></div>
<div style="left:261px;top:323px;width:1px;height:17px;background:#FFFFFF"></div>
<div style="left:271px;top:323px;width:1px;height:17px;background:#ACA899"></div>
<div style="left:261px;top:339px;width:11px;height:1px;background:#ACA899"></div>
<div style="left:272px;top:322px;width:1px;height:19px;background:#000"></div>
<div style="left:340px;top:323px;width:1px;height:17px;background:#D4D0C8"></div>
<div style="left:394px;top:323px;width:1px;height:17px;background:#D4D0C8"></div>
<div style="left:441px;top:323px;width:1px;height:17px;background:#D4D0C8"></div>
<div style="left:533px;top:323px;width:1px;height:17px;background:#D4D0C8"></div>
<div style="left:623px;top:323px;width:1px;height:17px;background:#D4D0C8"></div>
<div style="left:651px;top:323px;width:1px;height:17px;background:#D4D0C8"></div>
<div style="left:807px;top:323px;width:1px;height:17px;background:#D4D0C8"></div>
<div style="left:863px;top:323px;width:1px;height:17px;background:#D4D0C8"></div>
<div style="left:970px;top:323px;width:1px;height:17px;background:#D4D0C8"></div>
<div style="left:273px;top:340px;width:698px;height:1px;background:#D4D0C8"></div>
<div style="left:624px;top:323px;width:27px;height:17px;background:#316AC5"></div>
<svg style="left:0;top:0" width="988" height="616"><path d="M264 326L270 331.5L264 337Z" fill="#000"/></svg>
<div style="left:260px;top:366px;width:714px;height:22px;background:#ECE9D8"></div>
<div style="left:260px;top:366px;width:714px;height:1px;background:#ACA899"></div>
<div style="left:260px;top:366px;width:1px;height:22px;background:#ACA899"></div>
<div style="left:261px;top:367px;width:712px;height:1px;background:#716F64"></div>
<div style="left:261px;top:367px;width:1px;height:20px;background:#716F64"></div>
<div style="left:260px;top:387px;width:714px;height:1px;background:#FFFFFF"></div>
<div style="left:973px;top:366px;width:1px;height:22px;background:#FFFFFF"></div>
<span class="t" style="left:265px;top:372px;overflow:visible;">Код способа обезвреживания</span>
<div style="left:260px;top:390px;width:714px;height:1px;background:#ACA899"></div>
<div style="left:260px;top:390px;width:1px;height:21px;background:#ACA899"></div>
<div style="left:261px;top:391px;width:712px;height:1px;background:#716F64"></div>
<div style="left:261px;top:391px;width:1px;height:20px;background:#716F64"></div>
<div style="left:260px;top:411px;width:714px;height:1px;background:#FFFFFF"></div>
<div style="left:973px;top:390px;width:1px;height:22px;background:#FFFFFF"></div>
<div style="left:958px;top:392px;width:15px;height:9px;box-sizing:border-box;border:1px solid #E2DFD3;border-radius:2px;background:#F1EFE6"></div>
<div style="left:958px;top:402px;width:15px;height:9px;box-sizing:border-box;border:1px solid #E2DFD3;border-radius:2px;background:#F1EFE6"></div>
<div style="left:256px;top:421px;width:720px;height:1px;background:#FFFFFF"></div>
<div style="left:256px;top:421px;width:1px;height:18px;background:#FFFFFF"></div>
<div style="left:256px;top:438px;width:720px;height:1px;background:#ACA899"></div>
<div style="left:975px;top:421px;width:1px;height:18px;background:#ACA899"></div>
<span class="t" style="left:257px;top:424px;width:720px;text-align:center;">Количество отходов на объектах временного хранения (накопления) отходов</span>
<span class="t" style="left:262px;top:462px;overflow:visible;">Выбор</span>
<span class="t" style="left:305px;top:462px;overflow:visible;">Инвентаризация</span>
<span class="t" style="left:401px;top:462px;overflow:visible;">Объект</span>
<span class="t" style="left:450px;top:462px;overflow:visible;">Поиск</span>
<div style="left:256px;top:478px;width:718px;height:79px;background:#fff"></div>
<div style="left:256px;top:478px;width:718px;height:1px;background:#ACA899"></div>
<div style="left:256px;top:478px;width:1px;height:79px;background:#ACA899"></div>
<div style="left:257px;top:479px;width:717px;height:1px;background:#716F64"></div>
<div style="left:257px;top:479px;width:1px;height:78px;background:#716F64"></div>
<div style="left:256px;top:556px;width:718px;height:1px;background:#FFFFFF"></div>
<div style="left:973px;top:478px;width:1px;height:79px;background:#FFFFFF"></div>
<div style="left:258px;top:479px;width:717px;height:17px;background:#ECE9D8"></div>
<div style="left:258px;top:479px;width:11px;height:1px;background:#FFFFFF"></div>
<div style="left:258px;top:479px;width:1px;height:17px;background:#FFFFFF"></div>
<div style="left:268px;top:479px;width:1px;height:17px;background:#ACA899"></div>
<div style="left:269px;top:479px;width:1px;height:18px;background:#000"></div>
<div style="left:270px;top:479px;width:32px;height:1px;background:#FFFFFF"></div>
<div style="left:270px;top:479px;width:1px;height:17px;background:#FFFFFF"></div>
<div style="left:301px;top:479px;width:1px;height:17px;background:#ACA899"></div>
<div style="left:302px;top:479px;width:1px;height:18px;background:#000"></div>
<div style="left:303px;top:479px;width:87px;height:1px;background:#FFFFFF"></div>
<div style="left:303px;top:479px;width:1px;height:17px;background:#FFFFFF"></div>
<div style="left:389px;top:479px;width:1px;height:17px;background:#ACA899"></div>
<div style="left:390px;top:479px;width:1px;height:18px;background:#000"></div>
<div style="left:391px;top:479px;width:80px;height:1px;background:#FFFFFF"></div>
<div style="left:391px;top:479px;width:1px;height:17px;background:#FFFFFF"></div>
<div style="left:470px;top:479px;width:1px;height:17px;background:#ACA899"></div>
<div style="left:471px;top:479px;width:1px;height:18px;background:#000"></div>
<div style="left:472px;top:479px;width:81px;height:1px;background:#FFFFFF"></div>
<div style="left:472px;top:479px;width:1px;height:17px;background:#FFFFFF"></div>
<div style="left:552px;top:479px;width:1px;height:17px;background:#ACA899"></div>
<div style="left:553px;top:479px;width:1px;height:18px;background:#000"></div>
<div style="left:554px;top:479px;width:73px;height:1px;background:#FFFFFF"></div>
<div style="left:554px;top:479px;width:1px;height:17px;background:#FFFFFF"></div>
<div style="left:626px;top:479px;width:1px;height:17px;background:#ACA899"></div>
<div style="left:627px;top:479px;width:1px;height:18px;background:#000"></div>
<div style="left:628px;top:479px;width:71px;height:1px;background:#FFFFFF"></div>
<div style="left:628px;top:479px;width:1px;height:17px;background:#FFFFFF"></div>
<div style="left:698px;top:479px;width:1px;height:17px;background:#ACA899"></div>
<div style="left:699px;top:479px;width:1px;height:18px;background:#000"></div>
<div style="left:700px;top:479px;width:83px;height:1px;background:#FFFFFF"></div>
<div style="left:700px;top:479px;width:1px;height:17px;background:#FFFFFF"></div>
<div style="left:782px;top:479px;width:1px;height:17px;background:#ACA899"></div>
<div style="left:783px;top:479px;width:1px;height:18px;background:#000"></div>
<div style="left:784px;top:479px;width:77px;height:1px;background:#FFFFFF"></div>
<div style="left:784px;top:479px;width:1px;height:17px;background:#FFFFFF"></div>
<div style="left:860px;top:479px;width:1px;height:17px;background:#ACA899"></div>
<div style="left:861px;top:479px;width:1px;height:18px;background:#000"></div>
<div style="left:862px;top:479px;width:67px;height:1px;background:#FFFFFF"></div>
<div style="left:862px;top:479px;width:1px;height:17px;background:#FFFFFF"></div>
<div style="left:928px;top:479px;width:1px;height:17px;background:#ACA899"></div>
<div style="left:929px;top:479px;width:1px;height:18px;background:#000"></div>
<div style="left:930px;top:479px;width:44px;height:1px;background:#FFFFFF"></div>
<div style="left:930px;top:479px;width:1px;height:17px;background:#FFFFFF"></div>
<div style="left:973px;top:479px;width:1px;height:17px;background:#ACA899"></div>
<div style="left:974px;top:479px;width:1px;height:18px;background:#000"></div>
<div style="left:258px;top:495px;width:717px;height:1px;background:#ACA899"></div>
<div style="left:258px;top:496px;width:717px;height:1px;background:#000"></div>
<div class="ct" style="left:270px;top:483px;width:31px;height:13px;overflow:hidden;white-space:nowrap;line-height:13px;"><span style="position:absolute;left:1px;top:0">№овх.</span></div>
<div class="ct" style="left:303px;top:483px;width:86px;height:13px;overflow:hidden;display:flex;justify-content:center;white-space:nowrap;line-height:13px;"><span style="position:static;flex:none">Объект хранения</span></div>
<div class="ct" style="left:391px;top:483px;width:79px;height:13px;overflow:hidden;display:flex;justify-content:center;white-space:nowrap;line-height:13px;"><span style="position:static;flex:none">На 01.01.2008,т</span></div>
<div class="ct" style="left:472px;top:483px;width:80px;height:13px;overflow:hidden;display:flex;justify-content:center;white-space:nowrap;line-height:13px;"><span style="position:static;flex:none">На 01.01.2008,т</span></div>
<div class="ct" style="left:554px;top:483px;width:72px;height:13px;overflow:hidden;display:flex;justify-content:center;white-space:nowrap;line-height:13px;"><span style="position:static;flex:none">Фактически,т</span></div>
<div class="ct" style="left:628px;top:483px;width:70px;height:13px;overflow:hidden;display:flex;justify-content:center;white-space:nowrap;line-height:13px;"><span style="position:static;flex:none">Фактически,т</span></div>
<div class="ct" style="left:700px;top:483px;width:82px;height:13px;overflow:hidden;display:flex;justify-content:center;white-space:nowrap;line-height:13px;"><span style="position:static;flex:none">На 18.04.2008,т</span></div>
<div class="ct" style="left:784px;top:483px;width:76px;height:13px;overflow:hidden;display:flex;justify-content:center;white-space:nowrap;line-height:13px;"><span style="position:static;flex:none">На 18.04.2008,т</span></div>
<div class="ct" style="left:862px;top:483px;width:66px;height:13px;overflow:hidden;display:flex;justify-content:center;white-space:nowrap;line-height:13px;"><span style="position:static;flex:none">в т.ч.>3лет,т</span></div>
<div class="ct" style="left:930px;top:483px;width:43px;height:13px;overflow:hidden;white-space:nowrap;line-height:13px;"><span style="position:absolute;left:-8px;top:0">в т.ч.>3лет,т</span></div>
<div style="left:258px;top:497px;width:11px;height:17px;background:#ECE9D8"></div>
<div style="left:258px;top:497px;width:11px;height:1px;background:#FFFFFF"></div>
<div style="left:258px;top:497px;width:1px;height:17px;background:#FFFFFF"></div>
<div style="left:268px;top:497px;width:1px;height:17px;background:#ACA899"></div>
<div style="left:258px;top:513px;width:11px;height:1px;background:#ACA899"></div>
<div style="left:269px;top:496px;width:1px;height:19px;background:#000"></div>
<div style="left:270px;top:497px;width:704px;height:17px;background:#EFEDE3"></div>
<div style="left:302px;top:497px;width:1px;height:17px;background:#D4D0C8"></div>
<div style="left:390px;top:497px;width:1px;height:17px;background:#D4D0C8"></div>
<div style="left:471px;top:497px;width:1px;height:17px;background:#D4D0C8"></div>
<div style="left:553px;top:497px;width:1px;height:17px;background:#D4D0C8"></div>
<div style="left:627px;top:497px;width:1px;height:17px;background:#D4D0C8"></div>
<div style="left:699px;top:497px;width:1px;height:17px;background:#D4D0C8"></div>
<div style="left:783px;top:497px;width:1px;height:17px;background:#D4D0C8"></div>
<div style="left:861px;top:497px;width:1px;height:17px;background:#D4D0C8"></div>
<div style="left:929px;top:497px;width:1px;height:17px;background:#D4D0C8"></div>
<div style="left:974px;top:497px;width:1px;height:17px;background:#D4D0C8"></div>
<div style="left:270px;top:514px;width:704px;height:1px;background:#D4D0C8"></div>
<svg style="left:0;top:0" width="988" height="616"><path d="M261 500L267 505.5L261 511Z" fill="#000"/></svg>
<span class="t" style="left:305px;top:500px;width:85px;">Без распределения</span>
<span class="t" style="left:392px;top:500px;width:76px;text-align:right;">0</span>
<span class="t" style="left:473px;top:500px;width:77px;text-align:right;">0</span>
<span class="t" style="left:555px;top:500px;width:69px;text-align:right;">38</span>
<span class="t" style="left:629px;top:500px;width:67px;text-align:right;">38</span>
<span class="t" style="left:701px;top:500px;width:79px;text-align:right;">15</span>
<span class="t" style="left:785px;top:500px;width:73px;text-align:right;">15</span>
<div style="left:258px;top:541px;width:715px;height:16px;background:linear-gradient(#F3F1EC,#FEFEFB)"></div>
<div style="left:259px;top:542px;width:14px;height:15px;box-sizing:border-box;border:1px solid #F4F7FE;border-radius:2px;background:linear-gradient(135deg,#DCE6FE 0%,#C3D4FB 60%,#B4C8F6 100%);box-shadow:0 0 0 1px #D6DEF0"></div>
<svg style="left:0;top:0" width="988" height="616"><path d="M268.0 545.5L264.0 549.5L268.0 553.5" stroke="#4D6185" stroke-width="2.5" fill="none"/></svg>
<div style="left:958px;top:542px;width:14px;height:15px;box-sizing:border-box;border:1px solid #F4F7FE;border-radius:2px;background:linear-gradient(135deg,#DCE6FE 0%,#C3D4FB 60%,#B4C8F6 100%);box-shadow:0 0 0 1px #D6DEF0"></div>
<svg style="left:0;top:0" width="988" height="616"><path d="M963.0 545.5L967.0 549.5L963.0 553.5" stroke="#4D6185" stroke-width="2.5" fill="none"/></svg>
<div style="left:276px;top:542px;width:16px;height:15px;box-sizing:border-box;border:1px solid #F4F7FE;border-radius:2px;background:linear-gradient(135deg,#DCE6FE 0%,#C3D4FB 60%,#B4C8F6 100%);box-shadow:0 0 0 1px #D6DEF0"></div>
<div style="left:281px;top:546px;width:1px;height:7px;background:#EEF3FE"></div>
<div style="left:282px;top:547px;width:1px;height:7px;background:#A9BDEB"></div>
<div style="left:283px;top:546px;width:1px;height:7px;background:#EEF3FE"></div>
<div style="left:284px;top:547px;width:1px;height:7px;background:#A9BDEB"></div>
<div style="left:285px;top:546px;width:1px;height:7px;background:#EEF3FE"></div>
<div style="left:286px;top:547px;width:1px;height:7px;background:#A9BDEB"></div>
<div style="left:287px;top:546px;width:1px;height:7px;background:#EEF3FE"></div>
<div style="left:288px;top:547px;width:1px;height:7px;background:#A9BDEB"></div>
<div style="left:256px;top:558px;width:718px;height:22px;background:#ECE9D8"></div>
<div style="left:256px;top:558px;width:718px;height:1px;background:#ACA899"></div>
<div style="left:256px;top:558px;width:1px;height:22px;background:#ACA899"></div>
<div style="left:257px;top:559px;width:716px;height:1px;background:#716F64"></div>
<div style="left:257px;top:559px;width:1px;height:20px;background:#716F64"></div>
<div style="left:256px;top:580px;width:718px;height:1px;background:#FFFFFF"></div>
<div style="left:973px;top:558px;width:1px;height:22px;background:#FFFFFF"></div>
<span class="t" style="left:260px;top:562px;overflow:visible;">Без распределения по объектам хранения</span>
<div style="left:958px;top:560px;width:15px;height:10px;box-sizing:border-box;border:1px solid #E2DFD3;border-radius:2px;background:#F1EFE6"></div>
<div style="left:958px;top:571px;width:15px;height:9px;box-sizing:border-box;border:1px solid #E2DFD3;border-radius:2px;background:#F1EFE6"></div>
<svg style="left:21px;top:124px" width="16" height="16" shape-rendering="crispEdges"><rect x="1" y="1" width="12" height="3" fill="#0C1470"/><rect x="2" y="2" width="1" height="1" fill="#fff"/><rect x="5" y="2" width="1" height="1" fill="#fff"/><rect x="8" y="2" width="1" height="1" fill="#fff"/><rect x="11" y="2" width="1" height="1" fill="#fff"/><rect x="1" y="4" width="12" height="4" fill="#000"/><rect x="2" y="4" width="10" height="3" fill="#fff"/><rect x="3" y="5" width="2" height="1" fill="#000"/><rect x="6" y="5" width="2" height="1" fill="#000"/><rect x="9" y="5" width="2" height="1" fill="#000"/><rect x="0" y="7" width="12" height="5" fill="#000"/><rect x="1" y="8" width="10" height="3" fill="#fff"/><rect x="2" y="9" width="2" height="1" fill="#000"/><rect x="5" y="9" width="2" height="1" fill="#000"/><rect x="8" y="9" width="2" height="1" fill="#000"/><rect x="11" y="13" width="5" height="1" fill="#000"/><rect x="13" y="11" width="1" height="5" fill="#000"/></svg>
<svg style="left:66px;top:124px" width="16" height="16" shape-rendering="crispEdges"><rect x="1" y="1" width="12" height="3" fill="#0C1470"/><rect x="2" y="2" width="1" height="1" fill="#fff"/><rect x="5" y="2" width="1" height="1" fill="#fff"/><rect x="8" y="2" width="1" height="1" fill="#fff"/><rect x="11" y="2" width="1" height="1" fill="#fff"/><rect x="1" y="4" width="12" height="4" fill="#000"/><rect x="2" y="4" width="10" height="3" fill="#fff"/><rect x="3" y="5" width="2" height="1" fill="#000"/><rect x="6" y="5" width="2" height="1" fill="#000"/><rect x="9" y="5" width="2" height="1" fill="#000"/><rect x="0" y="7" width="12" height="5" fill="#000"/><rect x="1" y="8" width="10" height="3" fill="#fff"/><rect x="2" y="9" width="2" height="1" fill="#000"/><rect x="5" y="9" width="2" height="1" fill="#000"/><rect x="8" y="9" width="2" height="1" fill="#000"/><path d="M7.5 7.5L15 15.5M15.5 8L9 15.5" stroke="#8B0A14" stroke-width="1.6" shape-rendering="auto"/></svg>
<svg style="left:122px;top:125px" width="16" height="16" shape-rendering="crispEdges"><circle cx="7.5" cy="7.5" r="7.3" fill="#0A1880" shape-rendering="auto"/><rect x="6" y="3" width="3" height="2" fill="#fff"/><rect x="5" y="6" width="4" height="1" fill="#fff"/><rect x="6" y="6" width="3" height="5" fill="#fff"/><rect x="5" y="11" width="5" height="2" fill="#fff"/></svg>
<svg style="left:188px;top:128px" width="11" height="12" shape-rendering="crispEdges"><rect x="4" y="0" width="3" height="1" fill="#000"/><rect x="0" y="1" width="10" height="2" fill="#000"/><rect x="2" y="3" width="7" height="9" fill="#000"/><rect x="3" y="3" width="2" height="8" fill="#E8E8E0"/><rect x="6" y="3" width="1" height="7" fill="#fff"/><rect x="3" y="10" width="4" height="1" fill="#fff"/><rect x="1" y="3" width="1" height="1" fill="#555"/></svg>
<svg style="left:293px;top:104px" width="11" height="11" shape-rendering="crispEdges"><path d="M0.5 0.5H9V2.5M9 7V9H0.5L4.5 4.5L0.5 0.5" stroke="#000" stroke-width="1.6" fill="none" shape-rendering="auto"/></svg>
<svg style="left:377px;top:101px" width="17" height="15" shape-rendering="crispEdges"><g shape-rendering="auto" stroke="#000" stroke-linejoin="round"><path d="M1.5 8.5L5.5 4.5H14.5L10.5 8.5Z" fill="#fff" stroke-width="1.2"/><path d="M4 6L8 2H15V4.5" fill="#fff" stroke-width="1.2"/><path d="M6.5 3.5L9.5 0.8H15.5V3" fill="#fff" stroke-width="1.2"/><path d="M5 6.5Q8 5 10 6.5M7.5 4Q10 3 12 4" fill="none" stroke-width="1"/><path d="M1.5 8.5H10.5V13.5H1.5Z" fill="#F0F020" stroke-width="1.4"/><path d="M10.5 8.5L15 4V9L10.5 13.5Z" fill="#fff" stroke-width="1.2"/><path d="M2.5 9.5H9.5V10.5H2.5Z" fill="#fff" stroke="none"/></g></svg>
<svg style="left:464px;top:101px" width="16" height="15" shape-rendering="crispEdges"><path d="M4 1.5H14M3 5L1.5 12H14M14 12L8 7L14 1.5" stroke="#1A1A60" stroke-width="1" fill="none"/><rect x="3" y="0" width="3" height="3" fill="#000"/><rect x="12" y="0" width="3" height="3" fill="#000"/><rect x="0" y="4" width="3" height="3" fill="#000"/><rect x="7" y="6" width="3" height="3" fill="#000"/><rect x="0" y="11" width="3" height="3" fill="#000"/><rect x="12" y="11" width="3" height="3" fill="#000"/></svg>
<span class="t" style="left:554px;top:100px;font-weight:bold;font-size:16px;line-height:18px">$</span>
<svg style="left:638px;top:101px" width="17" height="15" shape-rendering="crispEdges"><g shape-rendering="auto"><path d="M4 6.5L5.5 1.5H14L12.5 6.5" fill="#fff" stroke="#000" stroke-width="1.5"/><path d="M7 3.3H12M6.5 5H11.5" stroke="#000" stroke-width="1"/><rect x="1" y="6.5" width="14" height="7" rx="1.5" fill="#000"/><rect x="2.5" y="8.5" width="10" height="2" fill="#F4F4DC"/><rect x="3.5" y="11.5" width="9" height="1" fill="#F4F4DC"/></g></svg>
<svg style="left:260px;top:217px" width="17" height="14" shape-rendering="crispEdges"><rect x="0" y="0" width="11" height="7" fill="#000"/><rect x="1" y="1" width="9" height="5" fill="#7A0A10"/><rect x="3" y="2" width="5" height="3" fill="#5A0008"/><rect x="11" y="3" width="3" height="6" fill="#A8A8A0"/><rect x="12" y="5" width="2" height="6" fill="#808078"/><path d="M2 13L5 11H14L15 13Z" fill="#8B0A10" shape-rendering="auto"/></svg>
<svg style="left:384px;top:213px" width="17" height="16" shape-rendering="crispEdges"><rect x="0" y="0" width="6" height="5" fill="#000"/><rect x="1" y="1" width="4" height="3" fill="#fff"/><rect x="1" y="2" width="4" height="1" fill="#fff"/><rect x="0" y="11" width="6" height="5" fill="#000"/><rect x="2" y="12" width="2" height="3" fill="#fff"/><rect x="1" y="12" width="4" height="3" fill="#fff"/><rect x="2" y="6" width="2" height="5" fill="#000"/><rect x="0" y="7" width="6" height="2" fill="#000"/><path d="M6.5 1.5L10.5 5.5M6.5 14L10.5 10" stroke="#000" stroke-width="1.4" stroke-dasharray="1.6 0.8" shape-rendering="auto"/><path d="M8.5 6L11 6L11 3.5Z M8.5 9.5L11 9.5L11 12Z" fill="#000" shape-rendering="auto"/><rect x="11" y="6" width="6" height="4" fill="#000"/><rect x="12" y="7" width="4" height="2" fill="#7A4A7A"/></svg>
<svg style="left:511px;top:217px" width="12" height="13" shape-rendering="crispEdges"><rect x="6" y="0" width="2" height="7" fill="#000"/><rect x="9" y="0" width="2" height="7" fill="#000"/><rect x="4" y="6" width="8" height="2" fill="#000"/><rect x="0" y="8" width="12" height="5" fill="#000"/><rect x="1" y="9" width="10" height="3" fill="#A0A0A0"/><rect x="4" y="7" width="7" height="2" fill="#A0A0A0"/></svg>
<svg style="left:635px;top:215px" width="16" height="16" shape-rendering="crispEdges"><g shape-rendering="auto"><circle cx="8" cy="8" r="8" fill="#000"/><path d="M6.94 6.30L4.08 1.72A7.4 7.4 0 0 1 11.92 1.72L9.06 6.30Z" fill="#F0F000"/><path d="M10.00 7.93L15.40 7.74A7.4 7.4 0 0 1 11.47 14.53L8.94 9.77Z" fill="#F0F000"/><path d="M7.06 9.77L4.53 14.53A7.4 7.4 0 0 1 0.60 7.74L6.00 7.93Z" fill="#F0F000"/></g></svg>
<svg style="left:758px;top:213px" width="17" height="14" shape-rendering="crispEdges"><g shape-rendering="auto"><path d="M0.5 4.5H3.5L6 1H11L13 4L15.5 6V11H0.5Z" fill="#109890" stroke="#000" stroke-width="1.2"/><path d="M1.5 5H4.5L6 3V7H1.5Z" fill="#E8E020"/><path d="M10 4H12.5L13 7H10Z" fill="#40E0E0"/><circle cx="4" cy="11.5" r="1.7" fill="#000"/><circle cx="11.5" cy="11.5" r="1.7" fill="#000"/></g></svg>
<svg style="left:260px;top:239px" width="16" height="16" shape-rendering="crispEdges"><rect x="0" y="0" width="16" height="16" fill="#000"/><rect x="1" y="1" width="14" height="14" fill="#F8F8F0"/><g shape-rendering="auto"><circle cx="11" cy="4.5" r="1.8" fill="none" stroke="#000" stroke-width="1"/><path d="M1.5 14L6 7.5L9 11L10 9.5L14.5 14" fill="none" stroke="#000" stroke-width="1"/><path d="M4 13L6 10M7 13L9 11M10 13L11 12" stroke="#000" stroke-width="0.8"/></g></svg>
<svg style="left:357px;top:269px" width="16" height="16" shape-rendering="crispEdges"><rect x="1" y="1" width="12" height="3" fill="#0C1470"/><rect x="2" y="2" width="1" height="1" fill="#fff"/><rect x="5" y="2" width="1" height="1" fill="#fff"/><rect x="8" y="2" width="1" height="1" fill="#fff"/><rect x="11" y="2" width="1" height="1" fill="#fff"/><rect x="1" y="4" width="12" height="4" fill="#000"/><rect x="2" y="4" width="10" height="3" fill="#fff"/><rect x="3" y="5" width="2" height="1" fill="#000"/><rect x="6" y="5" width="2" height="1" fill="#000"/><rect x="9" y="5" width="2" height="1" fill="#000"/><rect x="0" y="7" width="12" height="5" fill="#000"/><rect x="1" y="8" width="10" height="3" fill="#fff"/><rect x="2" y="9" width="2" height="1" fill="#000"/><rect x="5" y="9" width="2" height="1" fill="#000"/><rect x="8" y="9" width="2" height="1" fill="#000"/><rect x="11" y="13" width="5" height="1" fill="#000"/><rect x="13" y="11" width="1" height="5" fill="#000"/></svg>
<svg style="left:400px;top:270px" width="16" height="16" shape-rendering="crispEdges"><rect x="0" y="1" width="12" height="5" fill="#0C1470"/><rect x="1" y="2" width="10" height="3" fill="#fff"/><rect x="2" y="3" width="2" height="1" fill="#0C1470"/><rect x="5" y="3" width="2" height="1" fill="#0C1470"/><rect x="8" y="3" width="2" height="1" fill="#0C1470"/><rect x="5" y="6" width="2" height="4" fill="#000"/><rect x="4" y="9" width="4" height="1" fill="#000"/><rect x="0" y="10" width="12" height="5" fill="#000"/><rect x="1" y="11" width="10" height="3" fill="#fff"/><rect x="2" y="12" width="2" height="1" fill="#000"/><rect x="5" y="12" width="2" height="1" fill="#000"/><rect x="8" y="12" width="2" height="1" fill="#000"/></svg>
<svg style="left:450px;top:269px" width="16" height="16" shape-rendering="crispEdges"><rect x="1" y="1" width="12" height="3" fill="#0C1470"/><rect x="2" y="2" width="1" height="1" fill="#fff"/><rect x="5" y="2" width="1" height="1" fill="#fff"/><rect x="8" y="2" width="1" height="1" fill="#fff"/><rect x="11" y="2" width="1" height="1" fill="#fff"/><rect x="1" y="4" width="12" height="4" fill="#000"/><rect x="2" y="4" width="10" height="3" fill="#fff"/><rect x="3" y="5" width="2" height="1" fill="#000"/><rect x="6" y="5" width="2" height="1" fill="#000"/><rect x="9" y="5" width="2" height="1" fill="#000"/><rect x="0" y="7" width="12" height="5" fill="#000"/><rect x="1" y="8" width="10" height="3" fill="#fff"/><rect x="2" y="9" width="2" height="1" fill="#000"/><rect x="5" y="9" width="2" height="1" fill="#000"/><rect x="8" y="9" width="2" height="1" fill="#000"/><path d="M7.5 7.5L15 15.5M15.5 8L9 15.5" stroke="#8B0A14" stroke-width="1.6" shape-rendering="auto"/></svg>
<svg style="left:522px;top:269px" width="16" height="16" shape-rendering="crispEdges"><rect x="0" y="0" width="5" height="5" fill="#000"/><rect x="1" y="1" width="3" height="3" fill="#fff"/><rect x="3" y="2" width="5" height="6" fill="#000"/><rect x="4" y="3" width="3" height="4" fill="#fff"/><rect x="7" y="6" width="7" height="9" fill="#000"/><rect x="8" y="7" width="5" height="7" fill="#fff"/><rect x="9" y="8" width="3" height="1" fill="#000"/><rect x="9" y="10" width="3" height="1" fill="#000"/><rect x="9" y="12" width="3" height="1" fill="#000"/><rect x="0" y="10" width="5" height="1" fill="#101060"/><path d="M4 8L6.5 10.5L4 13Z" fill="#101060"/></svg>
<svg style="left:602px;top:269px" width="18" height="17" shape-rendering="crispEdges"><g shape-rendering="auto"><path d="M12 6L2.5 15" stroke="#1A1008" stroke-width="2.4"/><path d="M5 7L14 15.5" stroke="#000" stroke-width="2.4"/><path d="M5.5 7.5L13.5 15" stroke="#fff" stroke-width="0.6" stroke-dasharray="0.8 0.8"/><path d="M7.5 2L10 0.8L13 1.2L17 5.5L14.5 8.5L11.5 6.5L9 3.5Z" fill="#7C7A44" stroke="#000" stroke-width="1.2"/></g><rect x="1" y="3" width="2" height="4" fill="#000"/><rect x="1" y="6" width="6" height="2" fill="#000"/><rect x="5" y="2" width="2" height="5" fill="#000"/><rect x="3" y="4" width="2" height="2" fill="#fff"/></svg>
<svg style="left:661px;top:273px" width="11" height="11" shape-rendering="crispEdges"><path d="M0.5 0.5H9V2.5M9 7V9H0.5L4.5 4.5L0.5 0.5" stroke="#000" stroke-width="1.6" fill="none" shape-rendering="auto"/></svg>
<svg style="left:699px;top:269px" width="17" height="17" shape-rendering="crispEdges"><rect x="1" y="1" width="12" height="11" fill="#0C1470"/><rect x="2" y="4" width="10" height="7" fill="#fff"/><rect x="2" y="2" width="1" height="1" fill="#fff"/><rect x="5" y="2" width="1" height="1" fill="#fff"/><rect x="8" y="2" width="1" height="1" fill="#fff"/><rect x="11" y="2" width="1" height="1" fill="#fff"/><rect x="3" y="5" width="2" height="1" fill="#3040A0"/><rect x="3" y="7" width="2" height="1" fill="#3040A0"/><rect x="3" y="9" width="2" height="1" fill="#3040A0"/><rect x="6" y="5" width="3" height="5" fill="#000"/><rect x="11" y="5" width="3" height="5" fill="#000"/><rect x="4" y="9" width="5" height="7" fill="#000"/><rect x="11" y="9" width="5" height="7" fill="#000"/><rect x="8" y="8" width="4" height="4" fill="#000"/><rect x="7" y="6" width="1" height="1" fill="#fff"/><rect x="12" y="6" width="1" height="1" fill="#fff"/><rect x="5" y="12" width="1" height="2" fill="#fff"/><rect x="13" y="12" width="1" height="2" fill="#fff"/><rect x="9" y="10" width="1" height="1" fill="#fff"/></svg>
<svg style="left:270px;top:443px" width="16" height="16" shape-rendering="crispEdges"><rect x="0" y="0" width="5" height="5" fill="#000"/><rect x="1" y="1" width="3" height="3" fill="#fff"/><rect x="3" y="2" width="5" height="6" fill="#000"/><rect x="4" y="3" width="3" height="4" fill="#fff"/><rect x="7" y="6" width="7" height="9" fill="#000"/><rect x="8" y="7" width="5" height="7" fill="#fff"/><rect x="9" y="8" width="3" height="1" fill="#000"/><rect x="9" y="10" width="3" height="1" fill="#000"/><rect x="9" y="12" width="3" height="1" fill="#000"/><rect x="0" y="10" width="5" height="1" fill="#101060"/><path d="M4 8L6.5 10.5L4 13Z" fill="#101060"/></svg>
<svg style="left:340px;top:443px" width="17" height="16" shape-rendering="crispEdges"><rect x="5" y="0" width="9" height="7" fill="#0C1470"/><rect x="6" y="2" width="7" height="4" fill="#fff"/><rect x="0" y="4" width="9" height="7" fill="#000"/><rect x="1" y="6" width="7" height="4" fill="#D0D0F0"/><rect x="2" y="7" width="3" height="2" fill="#fff"/><g shape-rendering="auto"><path d="M10 13L15 6L16.5 7.5L11.5 14Z" fill="#E8D040" stroke="#000" stroke-width="0.8"/></g><rect x="2" y="15" width="1" height="1" fill="#000"/><rect x="4" y="15" width="1" height="1" fill="#000"/><rect x="6" y="15" width="1" height="1" fill="#000"/></svg>
<svg style="left:412px;top:444px" width="16" height="16" shape-rendering="crispEdges"><rect x="0" y="0" width="16" height="16" fill="#000"/><rect x="1" y="1" width="14" height="14" fill="#F8F8F0"/><g shape-rendering="auto"><circle cx="11" cy="4.5" r="1.8" fill="none" stroke="#000" stroke-width="1"/><path d="M1.5 14L6 7.5L9 11L10 9.5L14.5 14" fill="none" stroke="#000" stroke-width="1"/><path d="M4 13L6 10M7 13L9 11M10 13L11 12" stroke="#000" stroke-width="0.8"/></g></svg>
<svg style="left:457px;top:443px" width="17" height="17" shape-rendering="crispEdges"><rect x="1" y="1" width="12" height="11" fill="#0C1470"/><rect x="2" y="4" width="10" height="7" fill="#fff"/><rect x="2" y="2" width="1" height="1" fill="#fff"/><rect x="5" y="2" width="1" height="1" fill="#fff"/><rect x="8" y="2" width="1" height="1" fill="#fff"/><rect x="11" y="2" width="1" height="1" fill="#fff"/><rect x="3" y="5" width="2" height="1" fill="#3040A0"/><rect x="3" y="7" width="2" height="1" fill="#3040A0"/><rect x="3" y="9" width="2" height="1" fill="#3040A0"/><rect x="6" y="5" width="3" height="5" fill="#000"/><rect x="11" y="5" width="3" height="5" fill="#000"/><rect x="4" y="9" width="5" height="7" fill="#000"/><rect x="11" y="9" width="5" height="7" fill="#000"/><rect x="8" y="8" width="4" height="4" fill="#000"/><rect x="7" y="6" width="1" height="1" fill="#fff"/><rect x="12" y="6" width="1" height="1" fill="#fff"/><rect x="5" y="12" width="1" height="2" fill="#fff"/><rect x="13" y="12" width="1" height="2" fill="#fff"/><rect x="9" y="10" width="1" height="1" fill="#fff"/></svg>
<div style="left:4px;top:30px;width:1px;height:582px;background:#FFFFFF"></div>
<div style="left:983px;top:30px;width:1px;height:582px;background:#FFFFFF"></div>
<div style="left:6px;top:88px;width:976px;height:1px;background:#FFFFFF"></div>
<div style="left:6px;top:88px;width:1px;height:499px;background:#FFFFFF"></div>
<div style="left:981px;top:88px;width:1px;height:499px;background:#716F64"></div>
<div style="left:980px;top:91px;width:1px;height:496px;background:#ACA899"></div>
<div style="left:8px;top:91px;width:972px;height:1px;background:#FFFFFF"></div>
<div style="left:8px;top:91px;width:1px;height:495px;background:#FFFFFF"></div>
<div style="left:4px;top:586px;width:978px;height:1px;background:#716F64"></div>
<div style="left:4px;top:587px;width:978px;height:1px;background:#8E8C80"></div>
<div style="left:4px;top:588px;width:980px;height:1px;background:#B8B5A8"></div>
<div style="left:4px;top:589px;width:980px;height:1px;background:#D8D5C8"></div>
<div style="left:4px;top:590px;width:980px;height:1px;background:#FFFFFF"></div>
<div style="left:4px;top:592px;width:980px;height:1px;background:#ACA899"></div>
<div style="left:4px;top:611px;width:980px;height:1px;background:#FFFFFF"></div>
<svg style="left:0;top:0" width="988" height="616"><path d="M972 610L982 600M976 610L982 604M980 610L982 608" stroke="#A09E92" stroke-width="1.2"/><path d="M973 611L983 601M977 611L983 605" stroke="#fff" stroke-width="0.8"/></svg>
<div style="left:0px;top:0px;width:3px;height:3px;background:#fff;z-index:-1"></div>
<div style="left:252px;top:91px;width:1px;height:496px;background:#FFFFFF"></div>
</body></html>
